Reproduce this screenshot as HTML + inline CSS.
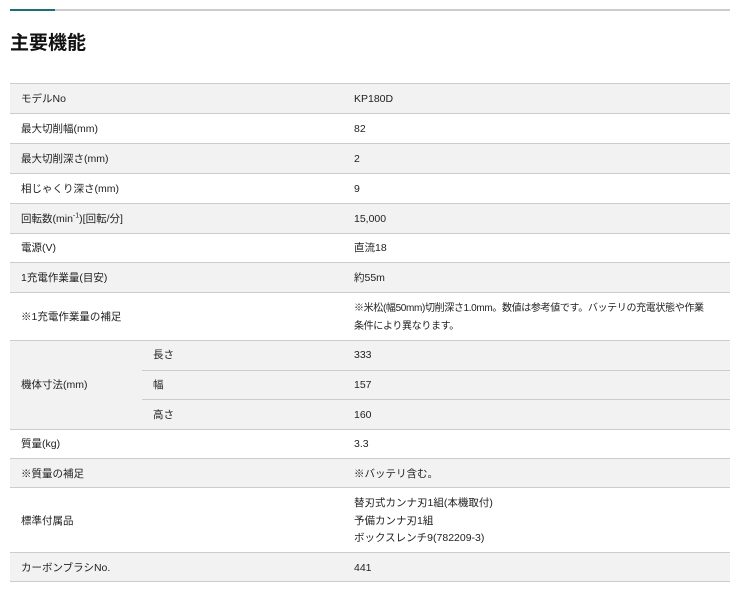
<!DOCTYPE html>
<html><head><meta charset="utf-8"><style>
body{margin:0;width:740px;height:593px;background:#fff;font-family:"Liberation Sans","Noto Sans CJK JP",sans-serif;color:#222;position:relative;overflow:hidden}
.a{position:absolute}
.r{position:absolute;left:10px;width:720px;border-bottom:1px solid #ccc;box-sizing:border-box}
.g{background:#f2f2f2}
.t{position:absolute;font-size:10.5px;line-height:15px;white-space:nowrap;margin-top:1px}
</style></head><body>
<div class="a" style="left:10px;top:9px;width:720px;height:2px;background:#ccc"></div>
<div class="a" style="left:10px;top:9px;width:45px;height:2px;background:#1a6f7a"></div>
<div class="a" style="left:10px;top:32px;font-size:19px;font-weight:bold;line-height:24px;color:#111">主要機能</div>
<div class="a" style="left:10px;top:83px;width:720px;height:1px;background:#ccc"></div>
<div class="r g" style="top:84px;height:30px"></div>
<div class="r" style="top:114px;height:30px"></div>
<div class="r g" style="top:144px;height:30px"></div>
<div class="r" style="top:174px;height:30px"></div>
<div class="r g" style="top:204px;height:30px"></div>
<div class="r" style="top:234px;height:29px"></div>
<div class="r g" style="top:263px;height:30px"></div>
<div class="r" style="top:293px;height:48px"></div>
<div class="r g" style="top:341px;height:89px"></div>
<div class="a" style="left:142px;top:370px;width:588px;height:1px;background:#ccc"></div>
<div class="a" style="left:142px;top:399px;width:588px;height:1px;background:#ccc"></div>
<div class="r" style="top:430px;height:29px"></div>
<div class="r g" style="top:459px;height:29px"></div>
<div class="r" style="top:488px;height:65px"></div>
<div class="r g" style="top:553px;height:29px"></div>

<div class="t" style="left:21px;top:91px">モデルNo</div><div class="t" style="left:354px;top:91px">KP180D</div>
<div class="t" style="left:21px;top:121px">最大切削幅(mm)</div><div class="t" style="left:354px;top:121px">82</div>
<div class="t" style="left:21px;top:151px">最大切削深さ(mm)</div><div class="t" style="left:354px;top:151px">2</div>
<div class="t" style="left:21px;top:181px">相じゃくり深さ(mm)</div><div class="t" style="left:354px;top:181px">9</div>
<div class="t" style="left:21px;top:211px">回転数(min<sup style="font-size:7px;line-height:0">-1</sup>)[回転/分]</div><div class="t" style="left:354px;top:211px">15,000</div>
<div class="t" style="left:21px;top:240px">電源(V)</div><div class="t" style="left:354px;top:240px">直流18</div>
<div class="t" style="left:21px;top:270px">1充電作業量(目安)</div><div class="t" style="left:354px;top:270px">約55m</div>
<div class="t" style="left:21px;top:309px">※1充電作業量の補足</div>
<div class="t" style="left:354px;top:299px;line-height:18px;font-size:10px;letter-spacing:-0.35px">※米松(幅50mm)切削深さ1.0mm。数値は参考値です。バッテリの充電状態や作業<br>条件により異なります。</div>
<div class="t" style="left:21px;top:377px">機体寸法(mm)</div>
<div class="t" style="left:153px;top:347px">長さ</div><div class="t" style="left:354px;top:347px">333</div>
<div class="t" style="left:153px;top:377px">幅</div><div class="t" style="left:354px;top:377px">157</div>
<div class="t" style="left:153px;top:407px">高さ</div><div class="t" style="left:354px;top:407px">160</div>
<div class="t" style="left:21px;top:436px">質量(kg)</div><div class="t" style="left:354px;top:436px">3.3</div>
<div class="t" style="left:21px;top:466px">※質量の補足</div><div class="t" style="left:354px;top:466px">※バッテリ含む。</div>
<div class="t" style="left:21px;top:513px">標準付属品</div>
<div class="t" style="left:354px;top:494px;line-height:17.5px">替刃式カンナ刃1組(本機取付)<br>予備カンナ刃1組<br>ボックスレンチ9(782209-3)</div>
<div class="t" style="left:21px;top:560px">カーボンブラシNo.</div><div class="t" style="left:354px;top:560px">441</div>
</body></html>
